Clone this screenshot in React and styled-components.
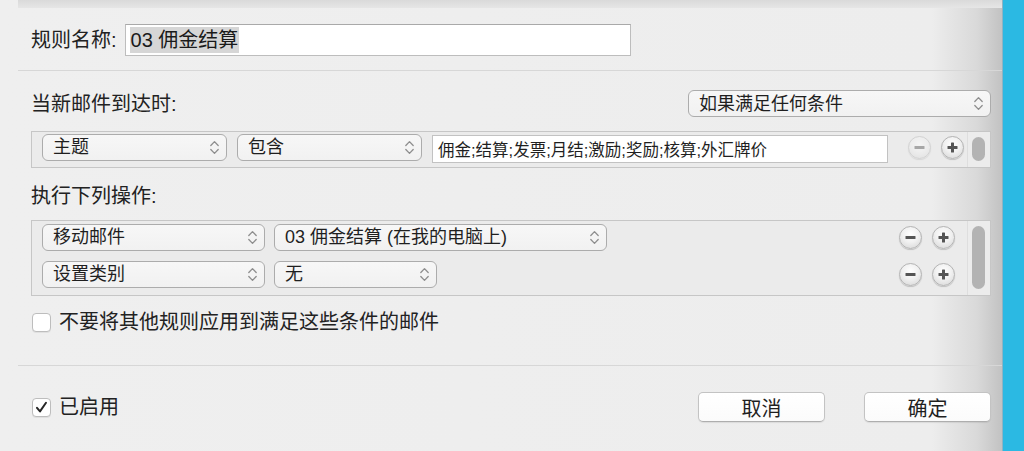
import React from "react";
import styled, { createGlobalStyle } from "styled-components";

const GlobalStyle = createGlobalStyle`
  html, body { margin: 0; padding: 0; }
  body {
    background: #eeeeee;
    font-family: "Liberation Sans", "Noto Sans CJK SC", sans-serif;
    color: #1f1f1f;
  }
`;

const Page = styled.div`
  display: flex;
  width: 1024px;
  height: 451px;
  overflow: hidden;
`;

const Dialog = styled.div`
  flex: 1;
  min-width: 0;
  display: flex;
  flex-direction: column;
  background: linear-gradient(to right, #efefef 0, #ededed 93%, #d9d9d9 97.5%, #c2c2c2 100%);
`;

const BlueStrip = styled.div`
  width: 21px;
  flex-shrink: 0;
  background: #2bb9e3;
  border-left: 1px solid #8fb3c2;
`;

const TopShade = styled.div`
  height: 8px;
  margin-left: 18px;
  background: linear-gradient(to bottom, #dadada, #e6e6e6);
`;

const Section = styled.div`
  display: flex;
  align-items: center;
  justify-content: ${(p) => p.$justify || "flex-start"};
  gap: ${(p) => p.$gap || 0}px;
  margin-top: ${(p) => p.$top || 0}px;
  padding: 0 11px 0 31px;
`;

const Label = styled.span`
  font-size: 20px;
  line-height: 24px;
  color: #222;
  white-space: nowrap;
`;

const NameInput = styled.div`
  width: 506px;
  height: 32px;
  box-sizing: border-box;
  background: #fff;
  border: 1px solid #bdbdbd;
  border-top-color: #a9a9a9;
  display: flex;
  align-items: center;
  padding-left: 4px;
`;

const Selected = styled.span`
  background: #d6d6d6;
  font-size: 20px;
  line-height: 26px;
  padding: 0 1px;
  color: #1a1a1a;
`;

const Separator = styled.div`
  height: 1px;
  background: #d7d7d7;
  margin-left: 18px;
  margin-top: ${(p) => p.$top}px;
`;

const Popup = styled.div`
  width: ${(p) => p.$w}px;
  height: 27px;
  box-sizing: border-box;
  border: 1px solid #acacac;
  border-radius: 6px;
  background: linear-gradient(to bottom, #f7f7f7, #f1f1f1);
  display: flex;
  align-items: center;
  justify-content: space-between;
  padding: 0 6px 0 10px;
  flex-shrink: 0;
`;

const PopupText = styled.span`
  font-size: 18px;
  line-height: 22px;
  color: #1f1f1f;
  white-space: nowrap;
`;

const Stepper = () => (
  <svg width="11" height="17" viewBox="0 0 11 17" fill="none">
    <path d="M1.8 6.5 L5.5 2.6 L9.2 6.5" stroke="#8e8e8e" strokeWidth="1.3" strokeLinecap="round" strokeLinejoin="round" />
    <path d="M1.8 10.5 L5.5 14.4 L9.2 10.5" stroke="#8e8e8e" strokeWidth="1.3" strokeLinecap="round" strokeLinejoin="round" />
  </svg>
);

const Select = ({ w, children }) => (
  <Popup $w={w}>
    <PopupText>{children}</PopupText>
    <Stepper />
  </Popup>
);

const RuleBox = styled.div`
  display: flex;
  margin: ${(p) => p.$top}px 11px 0 31px;
  border: 1px solid #c6c6c6;
  background: #ebebeb;
`;

const Rows = styled.div`
  flex: 1;
  min-width: 0;
  display: flex;
  flex-direction: column;
`;

const Row = styled.div`
  height: ${(p) => p.$h}px;
  box-sizing: border-box;
  display: flex;
  align-items: center;
  padding: 0 0 5px 10px;
  gap: ${(p) => p.$gap}px;
`;

const TextField = styled.div`
  width: 456px;
  height: 28px;
  flex-shrink: 0;
  box-sizing: border-box;
  background: #fff;
  border: 1px solid #c2c2c2;
  display: flex;
  align-items: center;
  padding-left: 5px;
  margin-top: 3px;
  font-size: 16.5px;
  color: #1f1f1f;
  white-space: nowrap;
`;

const Spacer = styled.div`
  flex: 1;
`;

const RoundBtns = styled.div`
  display: flex;
  gap: 10px;
  margin-right: 12px;
`;

const RoundBtn = styled.div`
  width: 23px;
  height: 23px;
  box-sizing: border-box;
  border-radius: 50%;
  border: 1px solid #b4b4b4;
  background: radial-gradient(circle at 50% 35%, #ffffff 0%, #f1f1f1 45%, #d4d4d4 100%);
  box-shadow: 0 1px 1px rgba(0, 0, 0, 0.18);
  display: flex;
  align-items: center;
  justify-content: center;
  opacity: ${(p) => (p.$disabled ? 0.45 : 1)};
`;

const MinusIcon = () => (
  <svg width="11" height="11" viewBox="0 0 11 11">
    <rect x="0.5" y="4" width="10" height="3" rx="0.6" fill="#555" />
  </svg>
);

const PlusIcon = () => (
  <svg width="11" height="11" viewBox="0 0 11 11">
    <rect x="0.5" y="4" width="10" height="3" rx="0.6" fill="#555" />
    <rect x="4" y="0.5" width="3" height="10" rx="0.6" fill="#555" />
  </svg>
);

const AddRemove = ({ disabledMinus }) => (
  <RoundBtns>
    <RoundBtn $disabled={disabledMinus}><MinusIcon /></RoundBtn>
    <RoundBtn><PlusIcon /></RoundBtn>
  </RoundBtns>
);

const ScrollTrack = styled.div`
  width: 23px;
  flex-shrink: 0;
  box-sizing: border-box;
  border-left: 1px solid #dedede;
  background: #ececec;
  padding: 5px 5px 6px 4px;
  display: flex;
`;

const Thumb = styled.div`
  flex: 1;
  border-radius: 7px;
  background: #b3b3b3;
`;

const CheckRow = styled.label`
  display: flex;
  align-items: center;
  gap: 8px;
  margin-top: ${(p) => p.$top || 0}px;
  padding-left: 32px;
`;

const CheckBox = styled.span`
  width: 19px;
  height: 19px;
  box-sizing: border-box;
  border: 1px solid #bdbdbd;
  border-radius: 4px;
  background: #fff;
  box-shadow: 0 1px 0 rgba(0, 0, 0, 0.06);
  display: flex;
  align-items: center;
  justify-content: center;
`;

const CheckMark = () => (
  <svg width="13" height="13" viewBox="0 0 13 13" fill="none">
    <path d="M2 6.8 L5 10.4 L11 1.8" stroke="#262626" strokeWidth="2" strokeLinecap="round" strokeLinejoin="round" />
  </svg>
);

const Footer = styled.div`
  display: flex;
  align-items: center;
  margin-top: 26px;
  padding-right: 11px;
`;

const Button = styled.div`
  width: 127px;
  height: 30px;
  box-sizing: border-box;
  border: 1px solid #c3c3c3;
  border-bottom-color: #aeaeae;
  border-radius: 5px;
  background: linear-gradient(to bottom, #ffffff, #fbfbfb);
  box-shadow: 0 1px 1px rgba(0, 0, 0, 0.08);
  display: flex;
  align-items: center;
  justify-content: center;
  font-size: 20px;
  color: #1f1f1f;
  margin-left: ${(p) => p.$ml || 0}px;
`;

export default function App() {
  return (
    <Page>
      <GlobalStyle />
      <Dialog>
        <TopShade />
        <Section $top={16} $gap={8}>
          <Label>规则名称:</Label>
          <NameInput>
            <Selected>03 佣金结算</Selected>
          </NameInput>
        </Section>
        <Separator $top={14} />
        <Section $top={19} $justify="space-between">
          <Label>当新邮件到达时:</Label>
          <Select w={303}>如果满足任何条件</Select>
        </Section>
        <RuleBox $top={14}>
          <Rows>
            <Row $h={35} $gap={10}>
              <Select w={185}>主题</Select>
              <Select w={185}>包含</Select>
              <TextField>佣金;结算;发票;月结;激励;奖励;核算;外汇牌价</TextField>
              <Spacer />
              <AddRemove disabledMinus />
            </Row>
          </Rows>
          <ScrollTrack>
            <Thumb />
          </ScrollTrack>
        </RuleBox>
        <Section $top={16}>
          <Label>执行下列操作:</Label>
        </Section>
        <RuleBox $top={12}>
          <Rows>
            <Row $h={37} $gap={9}>
              <Select w={223}>移动邮件</Select>
              <Select w={333}>03 佣金结算 (在我的电脑上)</Select>
              <Spacer />
              <AddRemove />
            </Row>
            <Row $h={37} $gap={9}>
              <Select w={223}>设置类别</Select>
              <Select w={163}>无</Select>
              <Spacer />
              <AddRemove />
            </Row>
          </Rows>
          <ScrollTrack>
            <Thumb />
          </ScrollTrack>
        </RuleBox>
        <CheckRow $top={14}>
          <CheckBox />
          <Label>不要将其他规则应用到满足这些条件的邮件</Label>
        </CheckRow>
        <Separator $top={31} />
        <Footer>
          <CheckRow>
            <CheckBox><CheckMark /></CheckBox>
            <Label>已启用</Label>
          </CheckRow>
          <Spacer />
          <Button>取消</Button>
          <Button $ml={39}>确定</Button>
        </Footer>
      </Dialog>
      <BlueStrip />
    </Page>
  );
}
